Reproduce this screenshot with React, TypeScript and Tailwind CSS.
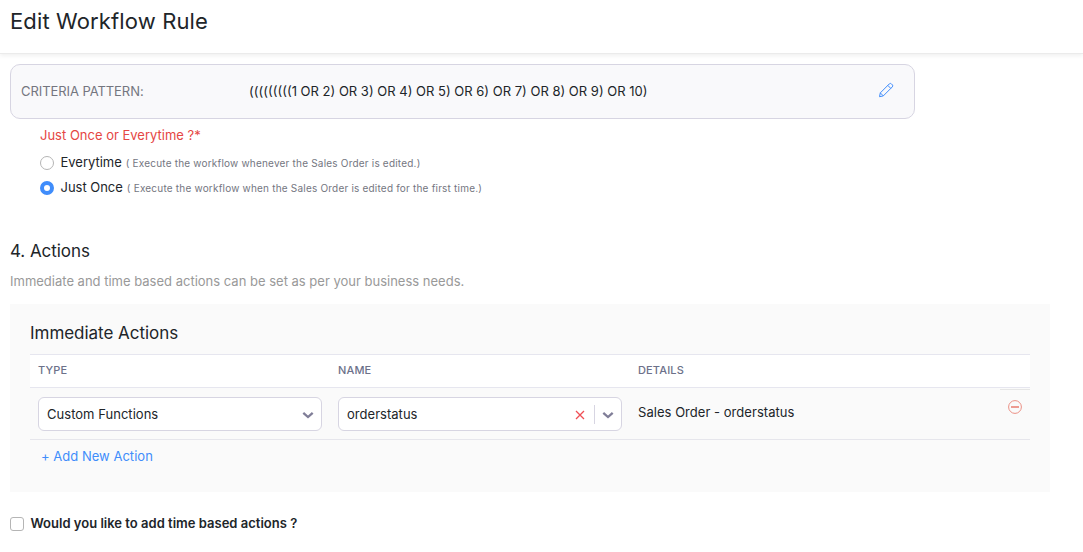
import type { ReactNode } from "react";

function Chevron() {
  return (
    <svg className="mt-0.5 h-3 w-3 shrink-0" viewBox="0 0 12 12" fill="none" stroke="#807e98" strokeWidth="2.3">
      <path d="M1.3 3.8 6 8l4.7-4.2" />
    </svg>
  );
}

function PencilIcon() {
  return (
    <svg className="mb-1 h-4 w-4" viewBox="0 0 16 16" fill="none" stroke="#408dfb" strokeWidth="1" strokeLinejoin="round">
      <path d="M1.5 14.7 2.3 10.9 11.3 1.9a1.5 1.5 0 0 1 2.1 0l.9.9a1.5 1.5 0 0 1 0 2.1l-9 9z" />
      <path d="m9.8 3.4 3 3M2.3 10.9l3 3" />
    </svg>
  );
}

function Option({ label, hint, checked }: { label: string; hint: string; checked?: boolean }) {
  return (
    <label className="flex h-[25px] items-center">
      <span
        className={
          checked
            ? "mr-[6.5px] h-[14px] w-[14px] rounded-full border-4 border-[#408dfb] bg-white"
            : "mr-[6.5px] h-[14px] w-[14px] rounded-full border border-[#b5b5b5] bg-white"
        }
      />
      <span className="flex items-baseline whitespace-nowrap">
        <span className="text-[13px] tracking-[-0.02px]">{label}</span>
        <span className="ml-1 text-[10px] tracking-[0.2px] text-[#74767f]">{hint}</span>
      </span>
    </label>
  );
}

function Field({ children }: { children: ReactNode }) {
  return (
    <div className="flex h-[34px] w-[284px] items-center rounded-md border border-[#d7d5e2] bg-white pr-[7px] pl-2 text-[13px] tracking-[0.03px]">
      {children}
    </div>
  );
}

export default function App() {
  return (
    <div className="h-[552px] w-[1083px] overflow-hidden bg-white font-['Inter',sans-serif] text-[#212529]">
      <header className="h-[54px] border-b border-[#ebebeb] pt-[5px] pl-[10px] shadow-[0_2px_4px_rgba(0,0,0,0.06)]">
        <h1 className="text-[22px] leading-8 tracking-[0.13px]">Edit Workflow Rule</h1>
      </header>

      <main className="px-[10px] pt-[10px] text-[13px] tracking-normal">
        <section className="flex h-[55px] w-[905px] items-center rounded-[10px] border border-[#d7d5e2] bg-[#f9f9fb] pr-5 pl-[10px]">
          <span className="w-[228px] tracking-[-0.07px] text-[#74767f]">CRITERIA PATTERN:</span>
          <span className="flex-1">(((((((((1 OR 2) OR 3) OR 4) OR 5) OR 6) OR 7) OR 8) OR 9) OR 10)</span>
          <PencilIcon />
        </section>

        <section className="pt-[6px] pl-[30px]">
          <p className="h-[25px] leading-5 text-[#e54643]">Just Once or Everytime ?*</p>
          <Option label="Everytime" hint="( Execute the workflow whenever the Sales Order is edited.)" />
          <Option label="Just Once" hint="( Execute the workflow when the Sales Order is edited for the first time.)" checked />
        </section>

        <h2 className="mt-[39px] text-[17px] leading-6 tracking-[-0.05px]">4. Actions</h2>
        <p className="mt-2 leading-5 text-[#999999]">Immediate and time based actions can be set as per your business needs.</p>

        <section className="mt-[13px] h-[188px] w-[1040px] bg-[#fafafa] px-5 pt-[17px]">
          <h3 className="text-[17px] leading-6 tracking-[-0.04px]">Immediate Actions</h3>
          <div className="mt-[9px] grid h-[34px] grid-cols-[300px_300px_1fr] items-center border-y border-[#e6e6ef] bg-white pb-0.5 pl-2 text-[11px] font-medium tracking-[0.15px] text-[#6c718a]">
            <span>TYPE</span>
            <span>NAME</span>
            <span>DETAILS</span>
          </div>
          <div className="flex h-[52px] items-start border-b border-[#e6e6ec] pl-2">
            <div className="w-[300px] pt-[9px]">
              <Field>
                <span className="flex-1 pt-0.5">Custom Functions</span>
                <Chevron />
              </Field>
            </div>
            <div className="w-[300px] pt-[9px]">
              <Field>
                <span className="flex-1 pt-0.5">orderstatus</span>
                <svg className="mt-0.5 mr-[9px] h-[10px] w-[10px]" viewBox="0 0 10 10" stroke="#f04f55" strokeWidth="1.3">
                  <path d="m1 1 8 8M9 1 1 9" />
                </svg>
                <span className="mr-[7px] h-[19px] w-px bg-[#d7d5e2]" />
                <Chevron />
              </Field>
            </div>
            <span className="flex-1 pt-[14px] leading-5 tracking-[0.04px]">Sales Order - orderstatus</span>
            <div className="mt-px flex h-9 w-[30px] justify-center border-t border-[#e6e6e6] pt-[10px]">
              <svg className="h-[14px] w-[14px]" viewBox="0 0 14 14" fill="none" stroke="#eb9085">
                <circle cx="7" cy="7" r="6.4" />
                <path d="M3 7h8" strokeWidth="1.8" />
              </svg>
            </div>
          </div>
          <button className="mt-[6px] ml-[11px] block leading-5 tracking-[0.02px] text-[#408dfb]">+ Add New Action</button>
        </section>

        <label className="mt-[22px] flex h-5 items-center">
          <span className="mr-[6.5px] h-[14px] w-[14px] rounded-[3px] border border-[#b5b5b5] bg-white" />
          <span className="font-semibold tracking-[0.01px]">Would you like to add time based actions ?</span>
        </label>
      </main>
    </div>
  );
}
